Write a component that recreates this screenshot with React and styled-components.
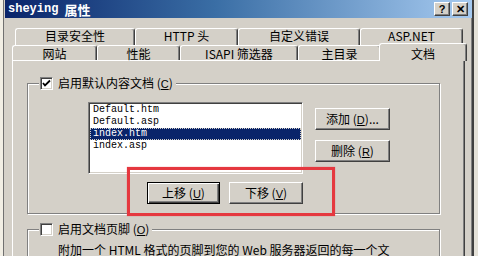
import React from "react";
import styled, { createGlobalStyle } from "styled-components";

const GlobalStyle = createGlobalStyle`
  html, body {
    margin: 0;
    padding: 0;
    background: #d4d0c8;
  }
  body {
    font-family: "Noto Sans CJK SC", "Liberation Sans", sans-serif;
    font-size: 12px;
    color: #000;
  }
`;

const Screen = styled.div`
  position: relative;
  width: 478px;
  height: 256px;
  overflow: hidden;
  display: flex;
  background: #e4e1d8;
`;

const DesktopEdge = styled.div`
  flex: none;
  width: 3px;
  background: #f1eee4;
  border-right: 1px solid #707070;
`;

const Window = styled.div`
  flex: none;
  width: 467px;
  display: flex;
  flex-direction: column;
  background: #d4d0c8;
  border-left: 1px solid #d4d0c8;
  border-right: 2px solid #404040;
  box-shadow: inset -1px 0 #808080;
`;

const TitleBar = styled.div`
  height: 18px;
  flex: none;
  display: flex;
  align-items: center;
  justify-content: space-between;
  padding: 0 4px 0 3px;
  background: linear-gradient(90deg, #0a246a 0%, #3a6ea5 45%, #a6caf0 100%);
  color: #fff;
  font-weight: bold;
`;

const Title = styled.div`
  display: flex;
  align-items: center;
  gap: 6px;
  font-size: 13px;
`;

const TitleLatin = styled.span`
  font-family: "Liberation Mono", monospace;
  font-size: 12px;
  font-weight: bold;
`;

const CaptionButtons = styled.div`
  display: flex;
  gap: 2px;
`;

const CaptionButton = styled.div`
  width: 14px;
  height: 12px;
  display: flex;
  align-items: center;
  justify-content: center;
  background: #d4d0c8;
  color: #000;
  border: 1px solid;
  border-color: #fff #404040 #404040 #fff;
  box-shadow: inset -1px -1px #808080;
  font-family: "Liberation Sans", sans-serif;
  font-size: 11px;
  font-weight: bold;
  line-height: 1;
`;

const Body = styled.div`
  flex: 1;
  display: flex;
  flex-direction: column;
  padding: 10px 7px 0 7px;
`;

const TabRow = styled.div`
  display: flex;
  height: ${(p) => p.$h}px;
  margin-left: ${(p) => p.$indent || 0}px;
  position: relative;
  z-index: ${(p) => (p.$front ? 2 : 1)};
`;

const Tab = styled.div`
  flex: none;
  box-sizing: border-box;
  display: flex;
  align-items: center;
  justify-content: center;
  background: #d4d0c8;
  border-top: 1px solid #fff;
  border-left: 1px solid #fff;
  border-right: 1px solid #404040;
  box-shadow: inset -1px 0 #808080;
  border-radius: 3px 3px 0 0;
  height: ${(p) => (p.$selected ? "calc(100% + 3px)" : "100%")};
  margin: ${(p) => (p.$selected ? "-2px -2px -1px" : "0")};
  width: ${(p) => (p.$selected ? p.$w + 4 : p.$w)}px;
  position: relative;
  z-index: ${(p) => (p.$selected ? 3 : 1)};
  padding-top: ${(p) => (p.$back ? 0 : p.$selected ? 2 : 1)}px;
  padding-bottom: ${(p) => (p.$back ? 2 : 0)}px;
  line-height: 1;
`;

const Panel = styled.div`
  flex: 1;
  position: relative;
  z-index: 1;
  padding: 22px 0 0 14px;
  border-top: 1px solid #fff;
  border-left: 1px solid #fff;
  border-right: 1px solid #404040;
  box-shadow: inset -1px 0 #808080;
`;

const Group = styled.div`
  width: 411px;
  margin-top: ${(p) => p.$top || 0}px;
  border: 1px solid #808080;
  box-shadow: inset 1px 1px #fff, 1px 1px #fff;
`;

const Legend = styled.div`
  width: fit-content;
  height: 16px;
  margin: -9px 0 0 11px;
  padding: 0 3px 0 1px;
  display: flex;
  align-items: center;
  gap: 5px;
  background: #d4d0c8;
  line-height: 16px;
`;

const CheckBox = styled.div`
  flex: none;
  box-sizing: border-box;
  width: 13px;
  height: 13px;
  background: #fff;
  border: 1px solid;
  border-color: #808080 #fff #fff #808080;
  box-shadow: inset 1px 1px #404040, inset -1px -1px #d4d0c8;
  display: flex;
  align-items: center;
  justify-content: center;
`;

const GroupBody = styled.div`
  padding: 11px 0 9px 60px;
`;

const TopRow = styled.div`
  display: flex;
  align-items: flex-start;
  gap: 12px;
`;

const ListBox = styled.div`
  box-sizing: border-box;
  width: 215px;
  height: 72px;
  background: #fff;
  border: 1px solid;
  border-color: #808080 #fff #fff #808080;
  box-shadow: inset 1px 1px #404040, inset -1px -1px #d4d0c8;
  padding: 1px;
  font-family: "Liberation Mono", monospace;
  font-size: 10px;
`;

const ListItem = styled.div`
  height: 12px;
  line-height: 12px;
  padding-left: 3px;
  background: ${(p) => (p.$selected ? "#0a246a" : "transparent")};
  color: ${(p) => (p.$selected ? "#fff" : "#000")};
  outline: ${(p) => (p.$selected ? "1px dotted #d4d0c8" : "none")};
  outline-offset: -1px;
`;

const ButtonColumn = styled.div`
  display: flex;
  flex-direction: column;
  gap: 10px;
  margin-top: 6px;
`;

const MoveRow = styled.div`
  display: flex;
  gap: 9px;
  margin: 8px 0 0 59px;
`;

const Button = styled.div`
  box-sizing: border-box;
  width: ${(p) => p.$w}px;
  height: 22px;
  display: flex;
  align-items: center;
  justify-content: center;
  background: #d4d0c8;
  border: 1px solid;
  border-color: ${(p) => (p.$default ? "#000" : "#fff #404040 #404040 #fff")};
  box-shadow: ${(p) =>
    p.$default
      ? "inset 1px 1px #fff, inset -1px -1px #404040, inset -2px -2px #808080"
      : "inset -1px -1px #808080"};
  line-height: 1;
`;

const Key = styled.span`
  text-decoration: underline;
  font-family: "Liberation Sans", sans-serif;
  font-size: 11px;
`;

const Note = styled.div`
  width: 340px;
  padding: 5px 0 0 30px;
  line-height: 16px;
`;

const Highlight = styled.div`
  position: absolute;
  z-index: 5;
  left: 127px;
  top: 167px;
  width: 208px;
  height: 49px;
  box-sizing: border-box;
  border: 3px solid #e5383f;
  box-shadow: 0 0 1px rgba(229, 56, 63, 0.6);
  pointer-events: none;
`;

const Check = () => (
  <svg width="9" height="9" viewBox="0 0 9 9">
    <polyline points="1,4 3,6.5 8,1.5" fill="none" stroke="#000" strokeWidth="1.8" />
  </svg>
);

const Label = ({ text, k, after }) => (
  <span>
    {text}(<Key>{k}</Key>){after}
  </span>
);

const backTabs = [
  { label: "目录安全性", w: 120 },
  { label: "HTTP 头", w: 103 },
  { label: "自定义错误", w: 122 },
  { label: "ASP.NET", w: 103 },
];

const frontTabs = [
  { label: "网站", w: 85 },
  { label: "性能", w: 83 },
  { label: "ISAPI 筛选器", w: 118 },
  { label: "主目录", w: 83 },
  { label: "文档", w: 84, selected: true },
];

const docs = ["Default.htm", "Default.asp", "index.htm", "index.asp"];

export default function App() {
  return (
    <>
      <GlobalStyle />
      <Screen>
        <DesktopEdge />
        <Window>
          <TitleBar>
            <Title>
              <TitleLatin>sheying</TitleLatin>
              <span>属性</span>
            </Title>
            <CaptionButtons>
              <CaptionButton>?</CaptionButton>
              <CaptionButton>✕</CaptionButton>
            </CaptionButtons>
          </TitleBar>
          <Body>
            <TabRow $h={17} $indent={3}>
              {backTabs.map((t) => (
                <Tab key={t.label} $w={t.w} $back>
                  {t.label}
                </Tab>
              ))}
            </TabRow>
            <TabRow $h={15} $front>
              {frontTabs.map((t) => (
                <Tab key={t.label} $w={t.w} $selected={t.selected}>
                  {t.label}
                </Tab>
              ))}
            </TabRow>
            <Panel>
              <Group>
                <Legend>
                  <CheckBox>
                    <Check />
                  </CheckBox>
                  <Label text="启用默认内容文档 " k="C" />
                </Legend>
                <GroupBody>
                  <TopRow>
                    <ListBox>
                      {docs.map((d) => (
                        <ListItem key={d} $selected={d === "index.htm"}>
                          {d}
                        </ListItem>
                      ))}
                    </ListBox>
                    <ButtonColumn>
                      <Button $w={75}>
                        <Label text="添加 " k="D" after="..." />
                      </Button>
                      <Button $w={75}>
                        <Label text="删除 " k="R" />
                      </Button>
                    </ButtonColumn>
                  </TopRow>
                  <MoveRow>
                    <Button $w={73} $default>
                      <Label text="上移 " k="U" />
                    </Button>
                    <Button $w={74}>
                      <Label text="下移 " k="V" />
                    </Button>
                  </MoveRow>
                </GroupBody>
              </Group>
              <Group $top={15}>
                <Legend>
                  <CheckBox />
                  <Label text="启用文档页脚 " k="O" />
                </Legend>
                <Note>附加一个 HTML 格式的页脚到您的 Web 服务器返回的每一个文档。</Note>
              </Group>
            </Panel>
          </Body>
        </Window>
        <Highlight />
      </Screen>
    </>
  );
}
